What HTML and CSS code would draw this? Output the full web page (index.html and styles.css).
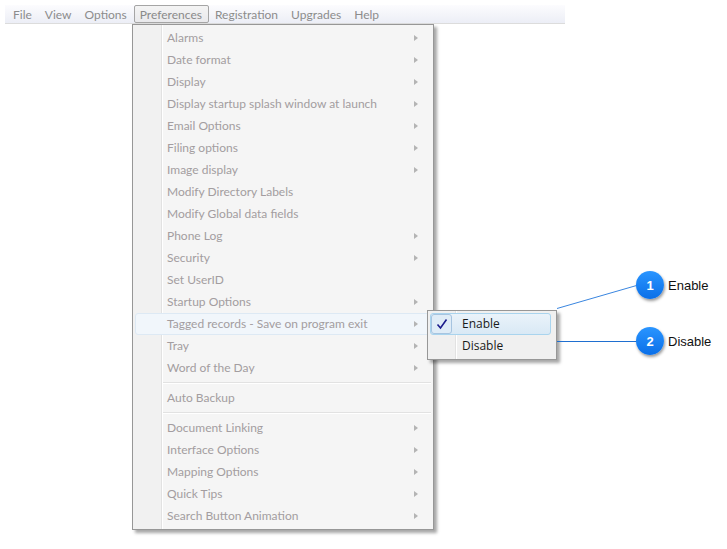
FILE: index.html
```html
<!DOCTYPE html>
<html lang="en">
  <head>
    <meta charset="UTF-8" />
    <title>Preferences menu</title>
    <link rel="stylesheet" href="styles.css">
  </head>
  <body>
    <!-- 選單列 -->
    <div class="menubar">
      <span class="top-item">File</span>
      <span class="top-item">View</span>
      <span class="top-item">Options</span>
      <span class="top-item open">Preferences</span>
      <span class="top-item">Registration</span>
      <span class="top-item">Upgrades</span>
      <span class="top-item">Help</span>
    </div>

    <!-- 下拉選單 -->
    <div class="menu" id="prefs"></div>

    <!-- 子選單 -->
    <div class="submenu">
      <div class="sub-item hot">
        <span class="check">
          <svg width="12" height="12" viewBox="0 0 12 12">
            <path d="M1.5 6.5 L4.5 10 L10.5 1.5" fill="none" stroke="#1c1c8c" stroke-width="1.6" />
          </svg>
        </span>
        <span class="sub-label">Enable</span>
      </div>
      <div class="sub-item">
        <span class="check"></span>
        <span class="sub-label">Disable</span>
      </div>
    </div>

    <!-- 說明的線 -->
    <svg class="leaders" width="727" height="549">
      <line x1="557" y1="308.5" x2="640" y2="284.5" stroke="#3a86e0" stroke-width="1" />
      <line x1="557" y1="341.5" x2="640" y2="341.5" stroke="#1f6fd0" stroke-width="1" />
    </svg>

    <div class="callout" style="left: 636px; top: 271px;">
      <span class="badge">1</span>
      <span class="callout-text">Enable</span>
    </div>
    <div class="callout" style="left: 636px; top: 327px;">
      <span class="badge">2</span>
      <span class="callout-text">Disable</span>
    </div>

    <script>
      // 選單的內容, "-" 是分隔線, arrow 表示有子選單
      const items = [
        ["Alarms", true],
        ["Date format", true],
        ["Display", true],
        ["Display startup splash window at launch", true],
        ["Email Options", true],
        ["Filing options", true],
        ["Image display", true],
        ["Modify Directory Labels", false],
        ["Modify Global data fields", false],
        ["Phone Log", true],
        ["Security", true],
        ["Set UserID", false],
        ["Startup Options", true],
        ["Tagged records - Save on program exit", true],
        ["Tray", true],
        ["Word of the Day", true],
        "-",
        ["Auto Backup", false],
        "-",
        ["Document Linking", true],
        ["Interface Options", true],
        ["Mapping Options", true],
        ["Quick Tips", true],
        ["Search Button Animation", true],
      ];

      const menu = document.querySelector("#prefs");
      let str = "";
      for (const it of items) {
        if (it === "-") {
          str += `<div class="sep"></div>`;
          continue;
        }
        const hot = it[0].startsWith("Tagged") ? " hot" : "";
        const arrow = it[1] ? `<span class="arrow"></span>` : "";
        str += `<div class="item${hot}"><span class="label">${it[0]}</span>${arrow}</div>`;
      }
      menu.innerHTML = str;
    </script>
  </body>
</html>
```

FILE: styles.css
```css
* {
  margin: 0;
  padding: 0;
  box-sizing: border-box;
}
body {
  position: relative;
  width: 727px;
  height: 549px;
  background: #ffffff;
  font-family: Lato, "Open Sans", sans-serif;
  font-size: 12px;
  overflow: hidden;
}

.menubar {
  display: flex;
  align-items: center;
  margin: 5px 0 0 5px;
  width: 560px;
  height: 19px;
  padding-left: 2px;
  background: linear-gradient(#fcfcfe, #eceef6);
  border-bottom: 1px solid #dcdcdc;
}
.top-item {
  padding: 1px 6px 0 5px;
  height: 18px;
  line-height: 16px;
  color: #8c8c8c;
  border: 1px solid transparent;
}
.top-item.open {
  border: 1px solid #a5a5a5;
  border-radius: 2px;
  background: linear-gradient(#f4f4f4, #e9e9ec);
  color: #8a8a8a;
}

.menu {
  /* 下拉選單蓋在頁面上 */
  position: absolute;
  left: 132px;
  top: 24px;
  width: 302px;
  padding: 2px;
  background: linear-gradient(to right, #f1f1f1 0, #f1f1f1 28px, #e2e2e2 28px, #e2e2e2 29px, #ffffff 29px, #ffffff 30px, #f5f5f5 30px);
  border: 1px solid #979797;
  box-shadow: 3px 3px 3px rgba(0, 0, 0, 0.35);
}
.item {
  display: flex;
  align-items: center;
  height: 22px;
  padding-left: 31px;
  padding-right: 12px;
  padding-bottom: 1px;
  color: #a39da0;
  border: 1px solid transparent;
  border-radius: 3px;
}
.item.hot {
  background: #f1f6fb;
  border-color: #dde9f4;
}
.label {
  flex: 1;
  white-space: nowrap;
}
.arrow {
  width: 0;
  height: 0;
  margin-top: 1px;
  border-top: 3.5px solid transparent;
  border-bottom: 3.5px solid transparent;
  border-left: 4px solid #b4b4b4;
}
.sep {
  height: 8px;
  margin-left: 28px;
  background: linear-gradient(#f5f5f5 3px, #e2e2e2 3px, #e2e2e2 4px, #ffffff 4px, #ffffff 5px, transparent 5px);
}

.submenu {
  position: absolute;
  left: 427px;
  top: 310px;
  width: 130px;
  padding: 2px;
  background: linear-gradient(to right, #f0f0f0 0, #f0f0f0 27px, #e2e2e2 27px, #e2e2e2 28px, #ffffff 28px, #ffffff 29px, #f0f0f0 29px);
  border: 1px solid #979797;
  box-shadow: 3px 3px 3px rgba(0, 0, 0, 0.35);
  font-family: "Open Sans", sans-serif;
  font-size: 12px;
}
.sub-item {
  display: flex;
  align-items: center;
  height: 22px;
  width: 121px;
  padding-bottom: 1px;
  color: #1a1a1a;
  border: 1px solid transparent;
  border-radius: 3px;
}
.sub-item.hot {
  background: linear-gradient(#eaf3fa, #d9e9f5);
  border-color: #a9d4ee;
}
.check {
  display: flex;
  align-items: center;
  justify-content: center;
  width: 21px;
  height: 20px;
  margin-right: 10px;
}
.sub-item.hot .check {
  border: 1px solid #a6c4e0;
  border-radius: 3px;
  background: #dfecf7;
}

.leaders {
  position: absolute;
  left: 0;
  top: 0;
  pointer-events: none;
}
.callout {
  position: absolute;
  display: flex;
  align-items: center;
  gap: 4px;
}
.badge {
  display: flex;
  align-items: center;
  justify-content: center;
  width: 28px;
  height: 28px;
  border-radius: 50%;
  background: linear-gradient(#2a95ff, #0a6fe8);
  box-shadow: 1px 2px 3px rgba(0, 0, 0, 0.4);
  color: #ffffff;
  font-family: "Liberation Sans", Arial, sans-serif;
  font-weight: bold;
  font-size: 13px;
}
.callout-text {
  font-family: "Liberation Sans", Arial, sans-serif;
  font-size: 13px;
  color: #111111;
}
```
